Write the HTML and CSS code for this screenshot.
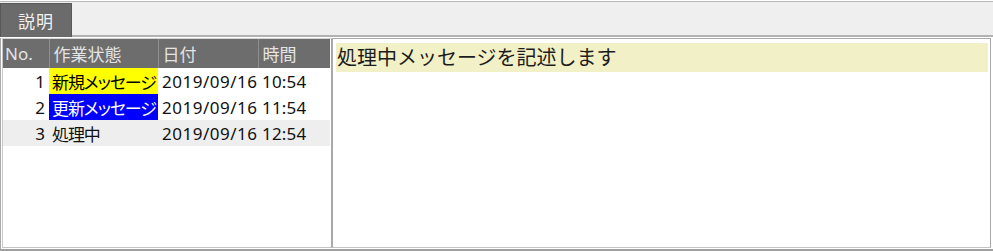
FILE: index.html
```html
<!DOCTYPE html>
<html lang="ja">
<head>
<meta charset="utf-8">
<title>説明</title>
<link rel="stylesheet" href="styles.css">
</head>
<body>
<div class="tabbar">
  <div class="tab">説明</div>
</div>
<div class="workspace">
  <div class="list-pane">
    <table class="grid">
      <colgroup>
        <col class="c-no"><col class="c-status"><col class="c-date"><col class="c-time">
      </colgroup>
      <thead>
        <tr><th class="h-no">No.</th><th>作業状態</th><th>日付</th><th class="last">時間</th></tr>
      </thead>
      <tbody>
        <tr><td class="no">1</td><td class="status new">新規メッセージ</td><td class="date">2019/09/16</td><td class="time">10:54</td></tr>
        <tr><td class="no">2</td><td class="status upd">更新メッセージ</td><td class="date">2019/09/16</td><td class="time">11:54</td></tr>
        <tr class="selected"><td class="no">3</td><td class="status">処理中</td><td class="date">2019/09/16</td><td class="time">12:54</td></tr>
      </tbody>
    </table>
  </div>
  <div class="detail-pane">
    <div class="detail-text">処理中メッセージを記述します</div>
  </div>
</div>
</body>
</html>
```

FILE: styles.css
```css
* { box-sizing: border-box; }

html, body {
  margin: 0;
  padding: 0;
  background: #ffffff;
}

body {
  width: 993px;
  height: 251px;
  overflow: hidden;
  font-family: "Noto Sans", "Noto Sans CJK JP", sans-serif;
  color: #111;
}

.tabbar {
  margin-top: 1px;
  height: 36px;
  background: #efefef;
  border-top: 1px solid #b8b8b8;
  border-bottom: 2px solid #b2b2b2;
  display: flex;
  align-items: flex-start;
}

.tab {
  width: 72px;
  height: 34px;
  margin-top: 1px;
  margin-bottom: -2px;
  background: #6b6b6b;
  border: 1px solid #585858;
  border-bottom: none;
  color: #f2f2f2;
  font-size: 17px;
  letter-spacing: 1px;
  display: flex;
  align-items: center;
  justify-content: center;
}

.workspace {
  margin-top: 1px;
  height: 213px;
  display: flex;
  border-left: 1px solid #a8a8a8;
  border-bottom: 2px solid #a0a0a0;
  padding-left: 1px;
  padding-bottom: 1px;
}

.list-pane {
  width: 331px;
  height: 210px;
  border-left: 1px solid #c8c8c8;
  border-top: 1px solid #d4d4d4;
  border-right: 2px solid #a9a9a9;
  border-bottom: 1px solid #c4c4c4;
  background: #ffffff;
}

.grid {
  width: 327px;
  border-collapse: collapse;
  table-layout: fixed;
  font-size: 17px;
}

.c-no { width: 46px; }
.c-status { width: 109px; }
.c-date { width: 100px; }
.c-time { width: 72px; }

.grid th {
  height: 29px;
  background: #6d6d6d;
  color: #e4e4e4;
  font-weight: normal;
  text-align: left;
  padding: 0 0 0 4px;
  border-right: 1px solid #8e8e8e;
  white-space: nowrap;
  overflow: hidden;
}

.grid th.h-no { padding-left: 2px; }
.grid th.last { border-right: none; }

.grid td {
  height: 26px;
  padding: 0;
  white-space: nowrap;
  overflow: hidden;
}

.grid td.no {
  text-align: right;
  padding-right: 4px;
}

.grid td.status {
  padding-left: 3px;
  font-feature-settings: "palt";
  letter-spacing: -1.1px;
}

.grid td.date {
  padding-left: 4px;
  letter-spacing: 0.5px;
}

.grid td.time {
  padding-left: 4px;
  letter-spacing: 0.2px;
}

.grid td.new {
  background: #ffff00;
  color: #000;
}

.grid td.upd {
  background: #0000ff;
  color: #ffffff;
}

.grid tr.selected td { background: #eeeeee; }

.detail-pane {
  width: 658px;
  height: 210px;
  border-top: 1px solid #a9a9a9;
  border-right: 1px solid #a9a9a9;
  border-bottom: 1px solid #c4c4c4;
  padding: 4px 2px 0 3px;
  background: #ffffff;
}

.detail-text {
  height: 29px;
  line-height: 29px;
  background: #f2f0c6;
  color: #1c1c1c;
  font-size: 20px;
  padding-left: 1px;
  white-space: nowrap;
}
```
